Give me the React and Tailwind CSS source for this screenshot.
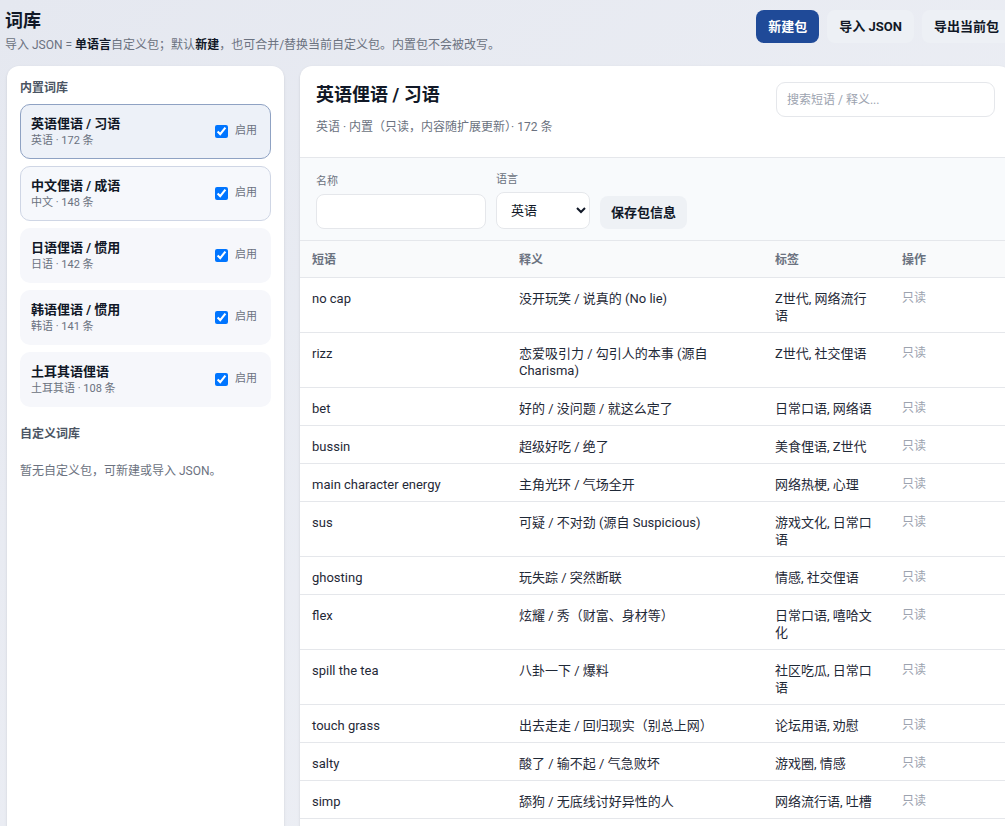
const packs = [
  { name: '英语俚语 / 习语', meta: '英语 · 172 条', active: true },
  { name: '中文俚语 / 成语', meta: '中文 · 148 条', hover: true },
  { name: '日语俚语 / 惯用', meta: '日语 · 142 条' },
  { name: '韩语俚语 / 惯用', meta: '韩语 · 141 条' },
  { name: '土耳其语俚语', meta: '土耳其语 · 108 条' },
]

const rows = [
  ['no cap', '没开玩笑 / 说真的 (No lie)', 'Z世代, 网络流行语'],
  ['rizz', '恋爱吸引力 / 勾引人的本事 (源自 Charisma)', 'Z世代, 社交俚语'],
  ['bet', '好的 / 没问题 / 就这么定了', '日常口语, 网络语'],
  ['bussin', '超级好吃 / 绝了', '美食俚语, Z世代'],
  ['main character energy', '主角光环 / 气场全开', '网络热梗, 心理'],
  ['sus', '可疑 / 不对劲 (源自 Suspicious)', '游戏文化, 日常口语'],
  ['ghosting', '玩失踪 / 突然断联', '情感, 社交俚语'],
  ['flex', '炫耀 / 秀（财富、身材等）', '日常口语, 嘻哈文化'],
  ['spill the tea', '八卦一下 / 爆料', '社区吃瓜, 日常口语'],
  ['touch grass', '出去走走 / 回归现实（别总上网）', '论坛用语, 劝慰'],
  ['salty', '酸了 / 输不起 / 气急败坏', '游戏圈, 情感'],
  ['simp', '舔狗 / 无底线讨好异性的人', '网络流行语, 吐槽'],
  ['slay', '杀疯了 / 太绝了', 'Z世代, 赞美'],
  ['vibe check', '氛围检测 / 看看状态', '网络流行语, 社交俚语'],
]

function PackItem({ pack }) {
  const tone = pack.active
    ? 'bg-[#edf1f8] border-[#8fa2c3]'
    : pack.hover
      ? 'bg-[#f6f8fc] border-[#cfd6e5]'
      : 'bg-[#f6f7fb] border-transparent'
  return (
    <div className={`flex items-center justify-between rounded-[10px] border px-[10px] py-[10px] ${tone}`}>
      <div>
        <div className="text-[13px] font-bold leading-[18px] text-[#111827]">{pack.name}</div>
        <div className="text-[11px] leading-[15px] text-[#6b7280]">{pack.meta}</div>
      </div>
      <label className="flex items-center gap-[7px] pr-[3px] text-[11px] text-[#6b7280]">
        <input type="checkbox" defaultChecked className="m-0 h-[13px] w-[13px]" />
        启用
      </label>
    </div>
  )
}

export default function App() {
  return (
    <div
      className="h-screen w-screen overflow-hidden bg-linear-to-br from-[#e5e8f0] to-[#eff1f6] text-[#111827]"
      style={{ fontFamily: 'Roboto, "Noto Sans CJK SC", sans-serif' }}
    >
      <div className="w-[1016px] pr-[5px] pl-[5px]">
        {/* Header */}
        <div className="flex items-start justify-between pt-[9px]">
          <div>
            <h1 className="text-[18px] font-bold leading-[24px]">词库</h1>
            <p className="mt-[4px] text-[12px] leading-[16px] text-[#6b7280]">
              导入 JSON = <b className="text-[#111827]">单语言</b>自定义包；默认<b className="text-[#111827]">新建</b>，也可合并/替换当前自定义包。内置包不会被改写。
            </p>
          </div>
          <div className="flex gap-[8px] pt-px">
            <button className="h-[33px] rounded-lg bg-[#1f4a98] px-[12px] text-[13px] font-bold text-white">新建包</button>
            <button className="h-[33px] rounded-lg bg-[#edf0f5] px-[12px] text-[13px] font-bold">导入 JSON</button>
            <button className="h-[33px] rounded-lg bg-[#edf0f5] px-[12px] text-[13px] font-bold">导出当前包</button>
          </div>
        </div>

        <div className="mt-[13px] grid grid-cols-[279px_1fr] gap-[16px]">
          {/* Sidebar */}
          <aside className="ml-[2px] rounded-xl bg-white px-[13px] pt-[14px] shadow-sm">
            <div className="text-[12px] font-bold leading-[16px] text-[#4b5563]">内置词库</div>
            <div className="mt-[8px] flex flex-col gap-[7px]">
              {packs.map((p) => (
                <PackItem key={p.name} pack={p} />
              ))}
            </div>
            <div className="mt-[19px] text-[12px] font-bold leading-[16px] text-[#4b5563]">自定义词库</div>
            <p className="mt-[21px] text-[12px] leading-[16px] text-[#6b7280]">暂无自定义包，可新建或导入 JSON。</p>
          </aside>

          {/* Main panel */}
          <section className="overflow-hidden rounded-xl bg-white shadow-sm">
            <div className="flex items-start justify-between px-4 pt-4 pb-[22px]">
              <div>
                <h2 className="mt-[1px] text-[18px] font-bold leading-[24px]">英语俚语 / 习语</h2>
                <p className="mt-[12px] text-[12px] leading-[16px] text-[#6b7280]">英语 · 内置（只读，内容随扩展更新）· 172 条</p>
              </div>
              <input
                placeholder="搜索短语 / 释义..."
                className="h-[35px] w-[219px] rounded-[9px] border border-[#e5e7eb] px-[10px] text-[12px] outline-none placeholder:text-[#9ca3af]"
              />
            </div>

            <div className="flex items-end gap-[10px] border-y border-[#e5e7eb] bg-[#f8fafc] px-4 pt-[14px] pb-[11px]">
              <div>
                <div className="mb-[4px] text-[11px] leading-[16px] text-[#6b7280]">名称</div>
                <input className="h-[35px] w-[170px] rounded-lg border border-[#e5e7eb] bg-white px-2 text-[13px]" />
              </div>
              <div>
                <div className="mb-[4px] text-[11px] leading-[16px] text-[#6b7280]">语言</div>
                <select defaultValue="en" className="h-[37px] w-[94px] rounded-lg border border-[#e5e7eb] bg-white px-[10px] text-[13px]">
                  <option value="en">英语</option>
                  <option value="zh">中文</option>
                </select>
              </div>
              <button className="h-[33px] rounded-lg bg-[#eef1f5] px-[11px] text-[13px] font-bold">保存包信息</button>
            </div>

            <table className="w-full table-fixed border-collapse text-left">
              <colgroup>
                <col className="w-[207px]" />
                <col className="w-[256px]" />
                <col className="w-[127px]" />
                <col />
              </colgroup>
              <thead>
                <tr className="border-b border-[#e5e7eb] bg-[#f9fafb] text-[12px] font-semibold text-[#6b7280]">
                  <th className="px-3 pt-[11px] pb-[9px] font-semibold leading-[16px]">短语</th>
                  <th className="px-3 pt-[11px] pb-[9px] font-semibold leading-[16px]">释义</th>
                  <th className="px-3 pt-[11px] pb-[9px] font-semibold leading-[16px]">标签</th>
                  <th className="px-3 pt-[11px] pb-[9px] font-semibold leading-[16px]">操作</th>
                </tr>
              </thead>
              <tbody className="text-[13px] leading-[17px]">
                {rows.map(([phrase, meaning, tags]) => (
                  <tr key={phrase} className="border-b border-[#e5e7eb] align-top">
                    <td className="px-3 pt-[12px] pb-[8px] text-[#1f2937]">{phrase}</td>
                    <td className="px-3 pt-[12px] pb-[8px] text-[#1f2937]">{meaning}</td>
                    <td className="px-3 pt-[12px] pb-[8px] text-[#1f2937]">{tags}</td>
                    <td className="px-3 pt-[12px] pb-[8px] text-[12px] text-[#9ca3af]">只读</td>
                  </tr>
                ))}
              </tbody>
            </table>
          </section>
        </div>
      </div>
    </div>
  )
}
